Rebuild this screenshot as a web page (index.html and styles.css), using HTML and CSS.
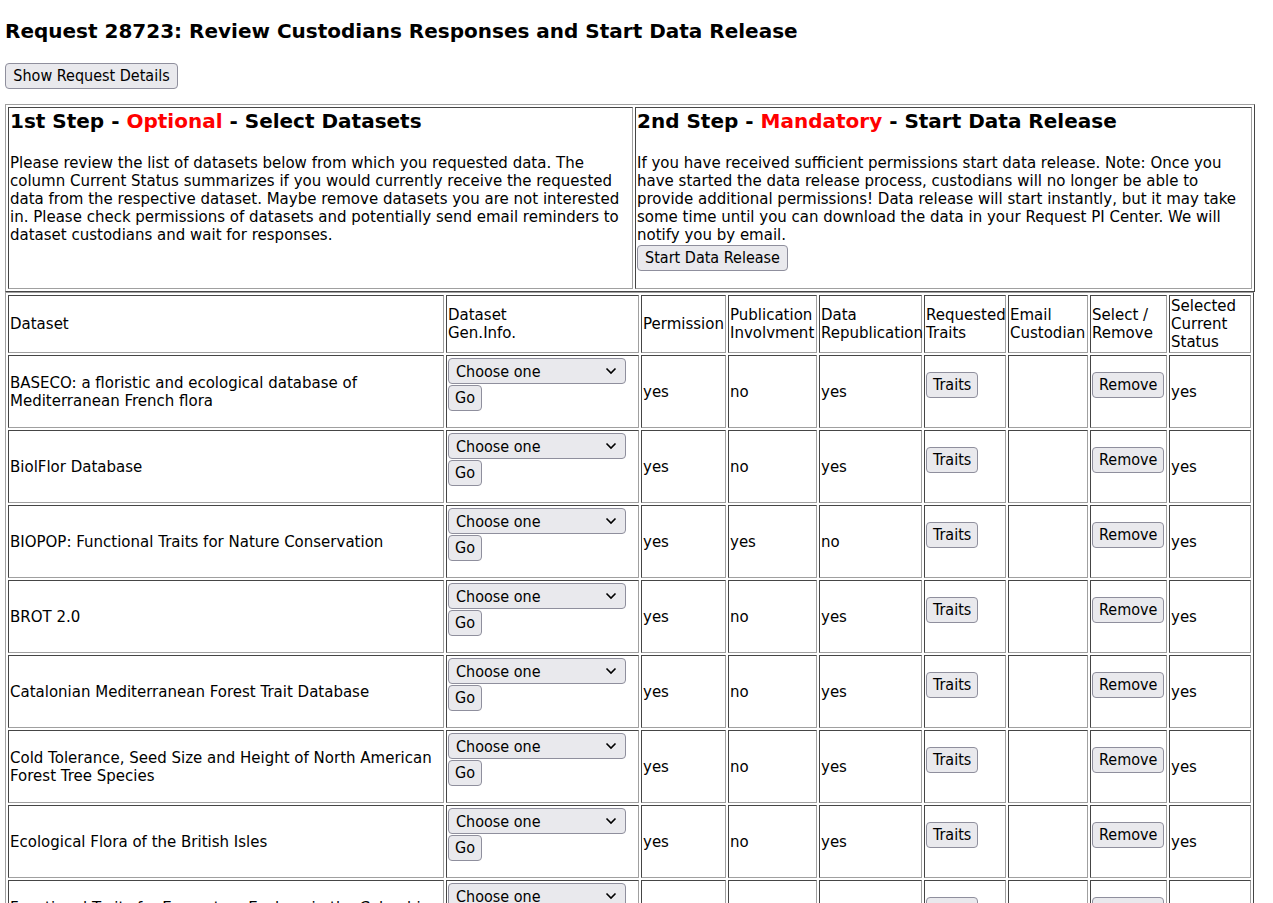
FILE: index.html
```html
<!DOCTYPE html>
<html>
<head>
<meta charset="utf-8">
<title>Request 28723</title>
<link rel="stylesheet" href="styles.css">
</head>
<body>
<h1 class="title">Request 28723: Review Custodians Responses and Start Data Release</h1>
<button class="btn btn-details">Show Request Details</button>

<table class="steps">
  <colgroup><col class="c-step1"><col class="c-step2"></colgroup>
  <tr>
    <td class="step">
      <div class="step-head">1st Step - <span class="red">Optional</span> - Select Datasets</div>
      <p class="step-text">Please review the list of datasets below from which you requested data. The column Current Status summarizes if you would currently receive the requested data from the respective dataset. Maybe remove datasets you are not interested in. Please check permissions of datasets and potentially send email reminders to dataset custodians and wait for responses.</p>
    </td>
    <td class="step">
      <div class="step-head">2nd Step - <span class="red">Mandatory</span> - Start Data Release</div>
      <p class="step-text">If you have received sufficient permissions start data release. Note: Once you have started the data release process, custodians will no longer be able to provide additional permissions! Data release will start instantly, but it may take some time until you can download the data in your Request PI Center. We will notify you by email.</p>
      <button class="btn btn-release">Start Data Release</button>
    </td>
  </tr>
</table>

<table class="datasets">
  <colgroup>
    <col class="c1"><col class="c2"><col class="c3"><col class="c4"><col class="c5"><col class="c6"><col class="c7"><col class="c8"><col class="c9">
  </colgroup>
  <tr class="head">
    <td>Dataset</td>
    <td>Dataset<br>Gen.Info.</td>
    <td>Permission</td>
    <td>Publication<br>Involvment</td>
    <td>Data<br>Republication</td>
    <td>Requested<br>Traits</td>
    <td>Email<br>Custodian</td>
    <td>Select /<br>Remove</td>
    <td>Selected<br>Current<br>Status</td>
  </tr>
  <tr class="row">
    <td>BASECO: a floristic and ecological database of Mediterranean French flora</td>
    <td class="gen"><select class="sel"><option>Choose one</option></select><button class="btn btn-go">Go</button></td>
    <td>yes</td><td>no</td><td>yes</td>
    <td class="act"><button class="btn btn-act">Traits</button></td>
    <td></td>
    <td class="act"><button class="btn btn-act">Remove</button></td>
    <td>yes</td>
  </tr>
  <tr class="row">
    <td>BiolFlor Database</td>
    <td class="gen"><select class="sel"><option>Choose one</option></select><button class="btn btn-go">Go</button></td>
    <td>yes</td><td>no</td><td>yes</td>
    <td class="act"><button class="btn btn-act">Traits</button></td>
    <td></td>
    <td class="act"><button class="btn btn-act">Remove</button></td>
    <td>yes</td>
  </tr>
  <tr class="row">
    <td>BIOPOP: Functional Traits for Nature Conservation</td>
    <td class="gen"><select class="sel"><option>Choose one</option></select><button class="btn btn-go">Go</button></td>
    <td>yes</td><td>yes</td><td>no</td>
    <td class="act"><button class="btn btn-act">Traits</button></td>
    <td></td>
    <td class="act"><button class="btn btn-act">Remove</button></td>
    <td>yes</td>
  </tr>
  <tr class="row">
    <td>BROT 2.0</td>
    <td class="gen"><select class="sel"><option>Choose one</option></select><button class="btn btn-go">Go</button></td>
    <td>yes</td><td>no</td><td>yes</td>
    <td class="act"><button class="btn btn-act">Traits</button></td>
    <td></td>
    <td class="act"><button class="btn btn-act">Remove</button></td>
    <td>yes</td>
  </tr>
  <tr class="row">
    <td>Catalonian Mediterranean Forest Trait Database</td>
    <td class="gen"><select class="sel"><option>Choose one</option></select><button class="btn btn-go">Go</button></td>
    <td>yes</td><td>no</td><td>yes</td>
    <td class="act"><button class="btn btn-act">Traits</button></td>
    <td></td>
    <td class="act"><button class="btn btn-act">Remove</button></td>
    <td>yes</td>
  </tr>
  <tr class="row">
    <td>Cold Tolerance, Seed Size and Height of North American Forest Tree Species</td>
    <td class="gen"><select class="sel"><option>Choose one</option></select><button class="btn btn-go">Go</button></td>
    <td>yes</td><td>no</td><td>yes</td>
    <td class="act"><button class="btn btn-act">Traits</button></td>
    <td></td>
    <td class="act"><button class="btn btn-act">Remove</button></td>
    <td>yes</td>
  </tr>
  <tr class="row">
    <td>Ecological Flora of the British Isles</td>
    <td class="gen"><select class="sel"><option>Choose one</option></select><button class="btn btn-go">Go</button></td>
    <td>yes</td><td>no</td><td>yes</td>
    <td class="act"><button class="btn btn-act">Traits</button></td>
    <td></td>
    <td class="act"><button class="btn btn-act">Remove</button></td>
    <td>yes</td>
  </tr>
  <tr class="row">
    <td>Functional Traits for Ecosystem Ecology in the Colombian Andes</td>
    <td class="gen"><select class="sel"><option>Choose one</option></select><button class="btn btn-go">Go</button></td>
    <td>yes</td><td>no</td><td>yes</td>
    <td class="act"><button class="btn btn-act">Traits</button></td>
    <td></td>
    <td class="act"><button class="btn btn-act">Remove</button></td>
    <td>yes</td>
  </tr>
</table>
</body>
</html>
```

FILE: styles.css
```css
html, body {
  background: #ffffff;
}
body {
  margin: 0;
  padding: 5px 0 0 5px;
  font-family: "DejaVu Sans", Verdana, sans-serif;
  font-size: 15px;
  line-height: 18px;
  color: #000;
}
.title {
  font-size: 20px;
  line-height: 24px;
  font-weight: bold;
  margin: 14px 0 20px 0;
}
.btn {
  font-family: "DejaVu Sans Condensed", "DejaVu Sans", sans-serif;
  font-size: 16px;
  color: #000;
  background: #e9e9ed;
  border: 1px solid #8f8f9d;
  border-radius: 4px;
  padding: 0 6px;
  height: 26px;
  line-height: 22px;
  margin: 0;
  display: block;
}
.btn-details {
  width: 173px;
  padding: 0;
  margin-bottom: 15px;
}
.steps, .datasets {
  border-collapse: separate;
  border-spacing: 2px;
  border-style: solid;
  border-width: 1px;
  border-color: #a0a0a0 #454545 #454545 #a0a0a0;
  table-layout: fixed;
}
.steps { width: 1250px; }
.datasets { width: 1249px; }
.steps td, .datasets td {
  border-style: solid;
  border-width: 1px;
  border-color: #454545 #a0a0a0 #a0a0a0 #454545;
  padding: 1px;
}
.c-step1 { width: 625px; }
.step {
  vertical-align: top;
}
.step-head {
  font-size: 20px;
  line-height: 24px;
  font-weight: bold;
}
.red { color: #ff0000; }
.step-text {
  margin: 21px 0 0 0;
}
.btn-release {
  margin-top: 1px;
  margin-bottom: 16px;
  width: 151px;
  padding: 0;
}
.c1 { width: 436px; }
.c2 { width: 193px; }
.c3 { width: 85px; }
.c4 { width: 89px; }
.c5 { width: 103px; }
.c6 { width: 82px; }
.c7 { width: 80px; }
.c8 { width: 77px; }
.c9 { width: 82px; }
.head td { height: 54px; }
.row td { height: 69px; }
.datasets td.gen {
  vertical-align: top;
}
.sel {
  appearance: none;
  -webkit-appearance: none;
  display: block;
  width: 178px;
  height: 26px;
  margin: 1px 0 0 0;
  padding: 0 24px 0 7px;
  font-family: "DejaVu Sans Condensed", "DejaVu Sans", sans-serif;
  font-size: 16px;
  color: #000;
  background: #e9e9ed url("data:image/svg+xml,%3Csvg xmlns='http://www.w3.org/2000/svg' width='12' height='8' viewBox='0 0 12 8'%3E%3Cpath d='M1.5 1.5 L6 6 L10.5 1.5' fill='none' stroke='%23000' stroke-width='1.6'/%3E%3C/svg%3E") no-repeat right 8px center;
  border: 1px solid #8f8f9d;
  border-radius: 4px;
}
.btn-go {
  margin-top: 1px;
  width: 34px;
  padding: 0;
}
.act .btn-act {
  margin-bottom: 14px;
}
```
